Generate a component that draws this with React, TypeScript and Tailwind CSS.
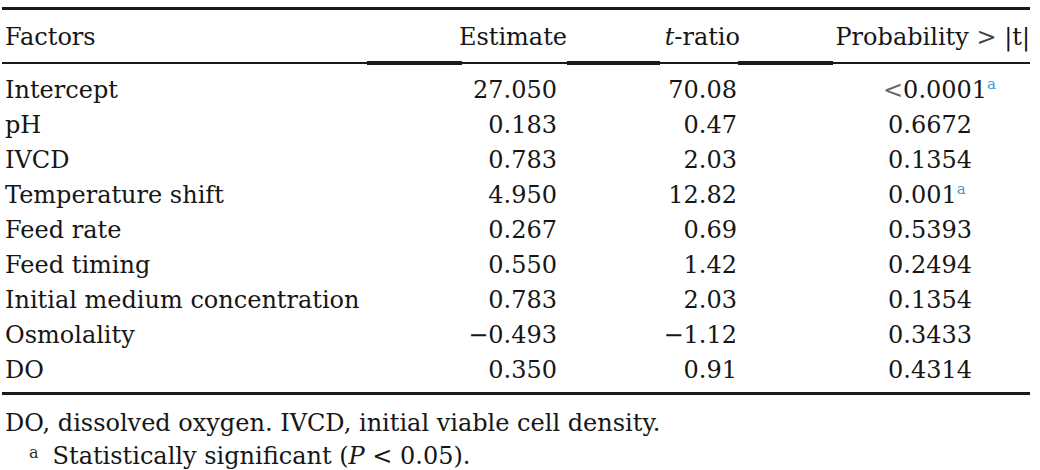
import React from "react";

type Row = {
  factor: string;
  estimate: string;
  tRatio: string;
  prob: string;
  lt?: boolean;
  sig?: boolean;
};

const rows: Row[] = [
  { factor: "Intercept", estimate: "27.050", tRatio: "70.08", prob: "0.0001", lt: true, sig: true },
  { factor: "pH", estimate: "0.183", tRatio: "0.47", prob: "0.6672" },
  { factor: "IVCD", estimate: "0.783", tRatio: "2.03", prob: "0.1354" },
  { factor: "Temperature shift", estimate: "4.950", tRatio: "12.82", prob: "0.001", sig: true },
  { factor: "Feed rate", estimate: "0.267", tRatio: "0.69", prob: "0.5393" },
  { factor: "Feed timing", estimate: "0.550", tRatio: "1.42", prob: "0.2494" },
  { factor: "Initial medium concentration", estimate: "0.783", tRatio: "2.03", prob: "0.1354" },
  { factor: "Osmolality", estimate: "\u22120.493", tRatio: "\u22121.12", prob: "0.3433" },
  { factor: "DO", estimate: "0.350", tRatio: "0.91", prob: "0.4314" },
];

// blue footnote marker next to significant values
function Sup() {
  return <sup className="relative -top-[9px] align-baseline text-[15px] text-[#3b9ccf]">a</sup>;
}

export default function App() {
  return (
    <div
      className="h-[470px] w-[1040px] overflow-hidden bg-white pl-[2px] pr-[10px] pt-[7px] text-[24px] text-[#161616]"
      style={{ fontFamily: '"DejaVu Serif", serif' }}
    >
      <div className="h-[3px] bg-[#1a1a1a]" />

      {/* header */}
      <div className="flex h-[50px] items-center pt-[4px] leading-none">
        <div className="w-[380px] pl-[3px]">Factors</div>
        <div className="w-[185px] text-right">Estimate</div>
        <div className="w-[173px] text-right">
          <span className="italic">t</span>-ratio
        </div>
        <div className="flex-1 text-right">
          Probability <span className="text-[#444]">&gt;</span> |t|
        </div>
      </div>

      <div className="flex h-[5px] items-center">
        <div className="h-[2px] w-[365px] bg-[#1a1a1a]" />
        <div className="h-[4px] w-[95px] bg-[#1a1a1a]" />
        <div className="h-[2px] w-[105px] bg-[#1a1a1a]" />
        <div className="h-[4px] w-[93px] bg-[#1a1a1a]" />
        <div className="h-[2px] w-[78px] bg-[#1a1a1a]" />
        <div className="h-[4px] w-[95px] bg-[#1a1a1a]" />
        <div className="h-[2px] flex-1 bg-[#1a1a1a]" />
      </div>

      <div className="pt-[7px] pb-[5px]">
        {rows.map((r) => (
          <div key={r.factor} className="flex h-[35px] items-center leading-none">
            <div className="w-[380px] pl-[3px]">{r.factor}</div>
            <div className="w-[175px] text-right">{r.estimate}</div>
            <div className="w-[180px] text-right">{r.tRatio}</div>
            <div className={`flex-1 ${r.lt ? "pl-[146px]" : "pl-[151px]"}`}>
              {r.lt ? <span className="text-[#666]">&lt;</span> : null}
              {r.prob}
              {r.sig ? <Sup /> : null}
            </div>
          </div>
        ))}
      </div>

      <div className="h-[3px] bg-[#1a1a1a]" />

      <div className="pt-[12px] leading-[33px]">
        <div className="pl-[3px]">DO, dissolved oxygen. IVCD, initial viable cell density.</div>
        <div className="pl-[27px]">
          <sup className="relative -top-[6px] mr-[14px] align-baseline text-[16px] text-[#333]">a</sup>
          Statistically significant (<span className="italic">P</span> &lt; 0.05).
        </div>
      </div>
    </div>
  );
}
